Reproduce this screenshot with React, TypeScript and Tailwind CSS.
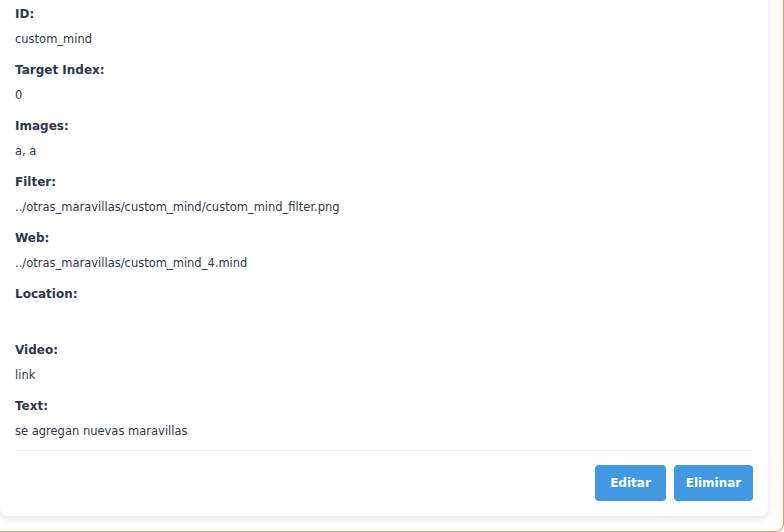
const FIELDS: { label: string; value: string }[] = [
  { label: 'ID:', value: 'custom_mind' },
  { label: 'Target Index:', value: '0' },
  { label: 'Images:', value: 'a, a' },
  { label: 'Filter:', value: '../otras_maravillas/custom_mind/custom_mind_filter.png' },
  { label: 'Web:', value: '../otras_maravillas/custom_mind_4.mind' },
  { label: 'Location:', value: '' },
  { label: 'Video:', value: 'link' },
  { label: 'Text:', value: 'se agregan nuevas maravillas' },
];

export default function App() {
  return (
    <div className="h-[532px] w-[784px] overflow-hidden rounded-br-lg border-b border-r border-[#e59a78] bg-white pr-[15px] font-['DejaVu_Sans',sans-serif]">
      <div className="-mt-[20px] rounded-lg bg-white px-[15px] pb-[15px] pt-[24px] shadow-[0_2px_8px_rgba(0,0,0,0.12)]">
        {FIELDS.map((f, i) => (
          <div key={f.label} className={i === FIELDS.length - 1 ? 'mb-[9px]' : 'mb-[11px]'}>
            <p className="mb-[5px] h-[20px] text-[12px] leading-[20px] font-bold text-[#2d3748]">{f.label}</p>
            <p className="h-[20px] text-[11.5px] leading-[20px] text-[#2d3748]">{f.value}</p>
          </div>
        ))}
        <div className="flex justify-end gap-2 border-t border-[#edf2f7] pt-[14px]">
          <button
            type="button"
            className="h-[36px] w-[71px] rounded bg-[#4299e1] text-[12px] font-bold text-white"
          >
            Editar
          </button>
          <button
            type="button"
            className="h-[36px] w-[79px] rounded bg-[#4299e1] text-[12px] font-bold text-white"
          >
            Eliminar
          </button>
        </div>
      </div>
    </div>
  );
}
